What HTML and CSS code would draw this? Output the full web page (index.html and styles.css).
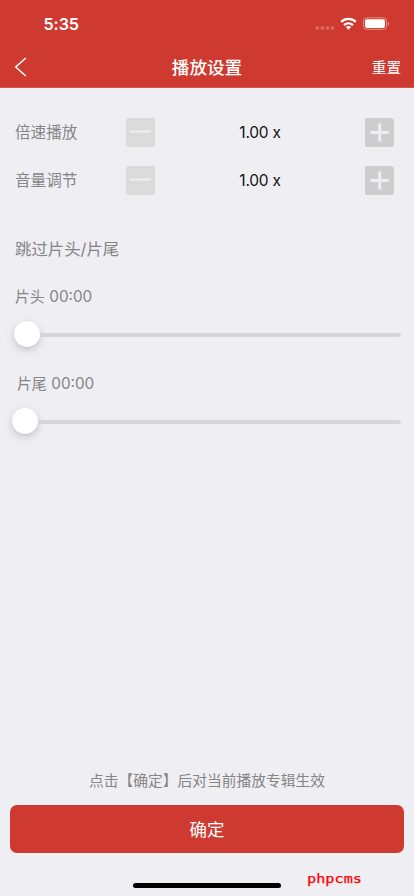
FILE: index.html
```html
<!DOCTYPE html>
<html lang="zh-CN">
<head>
<meta charset="utf-8">
<meta name="viewport" content="width=device-width, initial-scale=1">
<title>播放设置</title>
<link rel="stylesheet" href="styles.css">
</head>
<body>
<div class="screen">
  <header class="header">
    <div class="status">
      <span class="time">5:35</span>
      <svg class="status-icons" width="76" height="16" viewBox="0 0 76 16">
        <g fill="#fff" fill-opacity=".23"><circle cx="3.3" cy="12" r="1.9"/><circle cx="8.4" cy="12" r="1.9"/><circle cx="13.5" cy="12" r="1.9"/><circle cx="18.6" cy="12" r="1.9"/></g>
        <g fill="none" stroke="#fff" stroke-width="2.3"><path d="M27.2 5.8a10.8 10.8 0 0 1 14.6 0"/><path d="M30 9.1a6.8 6.8 0 0 1 9 0"/></g>
        <path d="M31.9 11.1a4.2 4.2 0 0 1 5.2 0L34.5 13.8z" fill="#fff"/>
        <rect x="49.5" y="1.8" width="23" height="11.6" rx="3.4" fill="none" stroke="#fff" stroke-opacity=".42"/>
        <rect x="51" y="3.3" width="20" height="8.6" rx="1.8" fill="#fff"/>
        <path d="M73.8 5.8q1.4.5 1.4 1.9t-1.4 1.9z" fill="#fff" fill-opacity=".45"/>
      </svg>
    </div>
    <nav class="nav">
      <svg class="back" width="13" height="20" viewBox="0 0 13 20"><path d="M11.8 1L1.7 10l10.1 9" fill="none" stroke="#fff" stroke-width="1.5"/></svg>
      <h1>播放设置</h1>
      <span class="reset">重置</span>
    </nav>
  </header>
  <main class="content">
    <div class="row">
      <span class="label">倍速播放</span>
      <svg class="step minus" width="29" height="29" viewBox="0 0 29 29"><path d="M4 13.5h21" stroke="#efeef3" stroke-width="2"/></svg>
      <span class="value">1.00 x</span>
      <svg class="step plus" width="29" height="29" viewBox="0 0 29 29"><path d="M5.5 14.5h18.3M14.7 5.5v18" stroke="#efeef3" stroke-width="2.8"/></svg>
    </div>
    <div class="row">
      <span class="label">音量调节</span>
      <svg class="step minus" width="29" height="29" viewBox="0 0 29 29"><path d="M4 13.5h21" stroke="#efeef3" stroke-width="2"/></svg>
      <span class="value">1.00 x</span>
      <svg class="step plus" width="29" height="29" viewBox="0 0 29 29"><path d="M5.5 14.5h18.3M14.7 5.5v18" stroke="#efeef3" stroke-width="2.8"/></svg>
    </div>
    <h2>跳过片头/片尾</h2>
    <div class="caption">片头 <span class="digits">00:00</span></div>
    <div class="slider"><span class="thumb"></span><span class="track"></span></div>
    <div class="caption tail">片尾 <span class="digits">00:00</span></div>
    <div class="slider tail-slider"><span class="thumb"></span><span class="track"></span></div>
  </main>
  <footer class="footer">
    <p class="note">点击【确定】后对当前播放专辑生效</p>
    <div class="confirm">确定</div>
    <div class="home"></div>
  </footer>
  <svg class="watermark" width="60" height="18" viewBox="0 0 60 18"><text x="1" y="12" textLength="55" lengthAdjust="spacingAndGlyphs">phpcms</text></svg>
</div>
</body>
</html>
```
FILE: styles.css
```css
* { box-sizing: border-box; }
body { margin: 0; font-family: Inter, "Noto Sans CJK SC", sans-serif; }
.screen {
  position: relative;
  display: flex;
  flex-direction: column;
  width: 414px;
  height: 896px;
  overflow: hidden;
  background: #efeef3;
  color: #858585;
}
.header { height: 88px; background: #cf3a30; color: #fff; border-bottom: 1px solid #d2564e; }
.status { display: flex; justify-content: space-between; align-items: center; height: 47px; padding: 0 24px 0 43.5px; }
.time { font-size: 16.2px; font-weight: 600; letter-spacing: -.1px; }
.nav { display: grid; grid-template-columns: 1fr auto 1fr; align-items: center; height: 40px; padding: 0 13px 0 14px; }
.nav h1 { margin: 1px 0 0 -1px; font-size: 17.6px; font-weight: 500; line-height: 24px; }
.reset { justify-self: end; margin-top: 2px; font-size: 14.6px; line-height: 20px; }
.content { padding: 20px 13px 0 15px; }
.row { display: grid; grid-template-columns: 111px 29px 1fr 29px 7px; align-items: center; height: 48.25px; }
.label { margin-top: 2px; font-size: 15.6px; line-height: 24px; white-space: nowrap; }
.value { color: #111; font-size: 15.5px; text-align: center; letter-spacing: -.25px; }
.step { display: block; }
.minus { background: #dbdbdb; border-radius: 3px 0 0 3px; }
.plus { background: #cdcdcd; border-radius: 0 3px 3px 0; }
h2 { margin: 32px 0 0; font-size: 16.4px; font-weight: 400; line-height: 24px; }
.caption { margin-top: 24.5px; font-size: 14.8px; line-height: 24px; }
.digits { margin-left: .5px; font-size: 15.3px; }
.slider { display: flex; align-items: center; height: 26px; margin: 12px 0 0 -1px; }
.thumb { width: 26px; height: 26px; border-radius: 50%; background: #fff; box-shadow: 0 3px 8px rgba(0, 0, 0, .17), 0 1px 2px rgba(0, 0, 0, .06); }
.track { flex: 1; height: 4px; margin-top: 2px; border-radius: 0 2px 2px 0; background: #d6d5db; }
.tail { padding-left: 2px; }
.tail-slider { margin-left: -3px; }
.footer { display: flex; flex-direction: column; align-items: center; margin-top: auto; padding: 0 10px 8px; }
.note { margin: 0 0 12px; font-size: 14.75px; line-height: 24px; }
.confirm { width: 100%; height: 48px; border-radius: 7px; background: #cf3a30; color: #fff; font-size: 17.5px; line-height: 49px; text-align: center; }
.home { width: 148px; height: 5px; margin-top: 30px; border-radius: 3px; background: #000; }
.watermark { position: absolute; left: 306px; top: 871px; font-family: "DejaVu Sans Mono", monospace; font-size: 13px; fill: #f00; stroke: #f00; stroke-width: .25px; }
```
